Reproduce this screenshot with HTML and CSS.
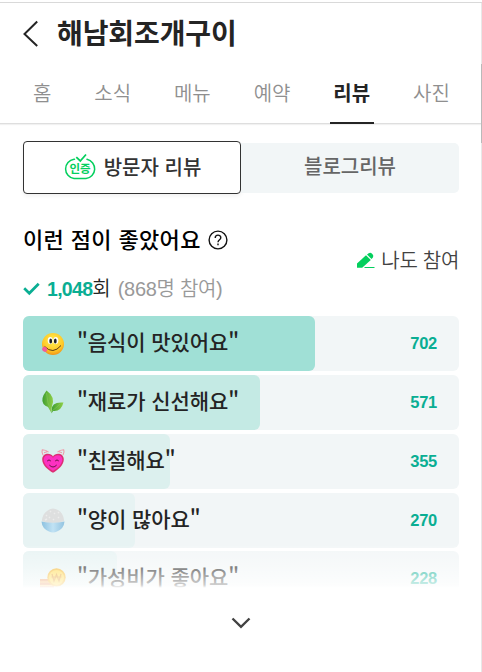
FILE: index.html
```html
<!DOCTYPE html>
<html lang="ko">
<head>
    <meta charset="UTF-8">
    <title>해남회조개구이</title>
    <link rel="stylesheet" href="styles.css">
</head>
<body>
<div class="page">
    <header class="header">
        <svg class="back" width="16" height="28" viewBox="0 0 16 28"><path d="M14.2 1.5 L1.5 14 L14.2 26" fill="none" stroke="#242424" stroke-width="2"/></svg>
        <h1>해남회조개구이</h1>
    </header>
    <nav class="tabs">
        <a>홈</a>
        <a>소식</a>
        <a>메뉴</a>
        <a>예약</a>
        <a class="on">리뷰</a>
        <a>사진</a>
    </nav>
    <main class="content">
        <div class="switch">
            <div class="switch-btn on">
                <svg width="34" height="28" viewBox="0 0 34 28">
                    <path d="M11.5 6.2 H11 A9.8 9.8 0 0 0 11 25.6 H23 A9.8 9.8 0 0 0 24 6.3" fill="none" stroke="#03cf5d" stroke-width="1.5" stroke-linecap="round"/>
                    <path d="M13.3 4.2 L17.3 8 L23 1.5" fill="none" stroke="#03cf5d" stroke-width="1.8"/>
                    <text x="17" y="20.3" text-anchor="middle">인증</text>
                </svg>
                <span>방문자 리뷰</span>
            </div>
            <div class="switch-btn">블로그리뷰</div>
        </div>
        <div class="summary">
            <div>
                <h2>이런 점이 좋았어요
                    <svg width="20" height="20" viewBox="0 0 20 20" fill="none" stroke="#111" stroke-width="1.4"><circle cx="10" cy="10" r="8.9"/><path d="M7.2 8 C7.2 4.2 12.8 4.2 12.8 7.8 C12.8 9.8 10 9.7 10 12.2"/><path d="M10 13.6 V15.2"/></svg>
                </h2>
                <p class="count">
                    <svg width="17" height="14" viewBox="0 0 17 14"><path d="M1.2 6.3 L6.3 11.3 L15.7 1.8" fill="none" stroke="#0aae93" stroke-width="2.7"/></svg>
                    <b>1,048</b><span>회</span><span class="people">(868명 참여)</span>
                </p>
            </div>
            <a class="join">
                <svg width="18" height="17" viewBox="0 0 18 17" fill="#03cf5d"><path d="M0 15.8 V11.6 L9 3.2 L13.8 8 L5.2 15.8 Z"/><path d="M10 2.5 L11.7 1.2 Q13.5 .1 15.3 1.9 Q17 3.8 15.7 5.7 L14.5 7 Z"/><path d="M7.5 15 H17.5 V16 H7.5 Z"/></svg>
                나도 참여
            </a>
        </div>
        <ul class="list">
            <li>
                <div class="bar c1" style="width:292px"></div>
                <svg class="icon" viewBox="0 0 24 24">
                    <defs><radialGradient id="face" cx=".5" cy=".35" r=".65"><stop offset="0" stop-color="#fff050"/><stop offset=".7" stop-color="#ffc928"/><stop offset="1" stop-color="#f19418"/></radialGradient></defs>
                    <circle cx="12" cy="12" r="11" fill="url(#face)"/>
                    <ellipse cx="9.2" cy="8.5" rx="2.5" ry="3.5" fill="#fff"/><ellipse cx="14.8" cy="8.5" rx="2.5" ry="3.5" fill="#fff"/>
                    <ellipse cx="9.7" cy="9" rx="1.4" ry="2.5" fill="#222"/><ellipse cx="14.3" cy="9" rx="1.4" ry="2.5" fill="#222"/>
                    <path d="M3.6 14.5 Q12 23 20 13.5" fill="none" stroke="#5b3b12" stroke-width="1"/>
                    <path d="M2.5 14.5 L5.5 15.5 Q7 18 5.5 19.5 Q3.5 20.7 1.5 18.5 Q.5 16.5 2.5 14.5 Z" fill="#f45c96"/>
                </svg>
                <strong>"음식이 맛있어요"</strong><em>702</em>
            </li>
            <li>
                <div class="bar c2" style="width:237px"></div>
                <svg class="icon" viewBox="0 0 24 24">
                    <defs><linearGradient id="leaf"><stop offset="0" stop-color="#3f9d30"/><stop offset="1" stop-color="#8fd048"/></linearGradient></defs>
                    <path d="M5.5 .5 Q-1 9 2.5 14 Q4 16 7 17 L10.5 23 L10.8 17 Q15 7 5.5 .5 Z" fill="url(#leaf)"/>
                    <path d="M11 20 Q10 11.5 22.5 12.5 Q20 22 12 21 L10.5 23.5 Z" fill="url(#leaf)"/>
                    <path d="M5.5 3 Q6 13 10.3 21.5 M11 21 Q15 18 19 14" fill="none" stroke="#8ccb60" stroke-width=".5"/>
                </svg>
                <strong>"재료가 신선해요"</strong><em>571</em>
            </li>
            <li>
                <div class="bar c3" style="width:147px"></div>
                <svg class="icon" viewBox="0 0 24 24">
                    <path d="M2 6 Q.3 3 1.3 .8 Q5 .8 7.5 3.2 M22 6 Q23.7 3 22.7 .8 Q19 .8 16.5 3.2 M3 3.8 L6 2.8 M21 3.8 L18 2.8" fill="none" stroke="#ef9aaa" stroke-width="1.1"/>
                    <path d="M12 7.5 C10 3.5 1.2 3.5 1.2 10.5 C1.2 16 7 21 12 23.8 C17 21 22.8 16 22.8 10.5 C22.8 3.5 14 3.5 12 7.5 Z" fill="#dc2f74"/>
                    <path d="M12 9 C10 5 2.7 5 2.7 10.5 C2.7 15 7.5 19.5 12 21.8 C16.5 19.5 21.3 15 21.3 10.5 C21.3 5 14 5 12 9 Z" fill="#fc31c1"/>
                    <path d="M6.2 12 Q8 9.8 9.8 12 M14.2 12 Q16 9.8 17.8 12 M8.3 16 Q12 20 15.7 16" fill="none" stroke="#571336" stroke-width=".9"/>
                </svg>
                <strong>"친절해요"</strong><em>355</em>
            </li>
            <li>
                <div class="bar c4" style="width:112px"></div>
                <svg class="icon" viewBox="0 0 24 24">
                    <defs><linearGradient id="bowl"><stop offset="0" stop-color="#8cc1e0"/><stop offset=".5" stop-color="#c1e2f4"/><stop offset="1" stop-color="#92c3e0"/></linearGradient></defs>
                    <path d="M.8 13 Q1.5 6 6 3 Q11-1.5 17 2 Q22.5 5 23.2 13 Q12 18 .8 13 Z" fill="#dedfdf"/>
                    <path d="M5 7 L6 8 M9 3 L10 4 M13 6 L14 5 M17 4 L18 5 M8 10 L9 9 M12 11 L13 12 M17 9 L18 10 M4 12 L6 11" stroke="#ececec" stroke-width="1.4"/>
                    <path d="M.5 13.5 Q12 16 23.5 13.5 Q23 20.5 16 23.5 Q12 25.5 8 23.5 Q1 20.5 .5 13.5 Z" fill="url(#bowl)"/>
                </svg>
                <strong>"양이 많아요"</strong><em>270</em>
            </li>
            <li>
                <div class="bar c4" style="width:94px"></div>
                <svg class="icon" viewBox="0 0 24 24">
                    <path d="M-1 13 H13 V23 H-1 Z" fill="#e9975e"/><path d="M-1 16 H13 M-1 19.5 H13" stroke="#ffd27c"/>
                    <circle cx="15.5" cy="11.5" r="9.2" fill="#f4b82f"/><circle cx="15.5" cy="11.5" r="7.5" fill="#ffda4d"/>
                    <path d="M11 8 L13 15 L15.5 8.5 L18 15 L20 8 M10.5 11 H20.5" fill="none" stroke="#e29a2d" stroke-width="1.2"/>
                </svg>
                <strong>"가성비가 좋아요"</strong><em>228</em>
            </li>
        </ul>
        <div class="more">
            <svg width="20" height="12" viewBox="0 0 20 12"><path d="M1.5 1.5 L10 9.8 L18.5 1.5" fill="none" stroke="#424242" stroke-width="2.4"/></svg>
        </div>
    </main>
    <div class="scroll"></div>
</div>
</body>
</html>
```
FILE: styles.css
```css
*{
    padding: 0;
    margin: 0;
    list-style: none;
    box-sizing: border-box;
}
body{
    font-family: "Noto Sans CJK KR", sans-serif;
    color: #242424;
    background: #fff;
}
svg{
    display: block;
    flex: none;
    overflow: visible;
}
.page{
    position: relative;
    height: 672px;
    padding-top: 2px;
    overflow: hidden;
}
.header{
    display: flex;
    align-items: center;
    height: 64px;
    padding: 0 0 1px 23px;
    border-top: 1px solid #d9d9d9;
}
.header h1{
    margin: -5px 0 0 18px;
    font-size: 28px;
    line-height: 40px;
    font-weight: 700;
    letter-spacing: -.1px;
}
.tabs{
    display: flex;
    gap: 35.5px;
    height: 58px;
    padding-left: 29.3px;
    border-bottom: 1px solid #dedede;
    box-shadow: 0 1px 1px #f1f1f1;
}
.tabs a{
    height: 58px;
    padding: 0 3.7px;
    font-size: 20px;
    line-height: 54px;
    font-weight: 350;
    color: #8f8f8f;
}
.tabs a.on{
    color: #242424;
    font-weight: 700;
    border-bottom: 2px solid #242424;
}
.content{
    padding: 17px 23px 0;
}
.switch{
    display: flex;
    align-items: center;
    height: 53px;
}
.switch-btn{
    display: flex;
    justify-content: center;
    align-items: center;
    width: 218px;
    height: 50px;
    padding-bottom: 4px;
    font-size: 20px;
    font-weight: 500;
    color: #666;
    background: #f2f6f7;
    border-radius: 0 5px 5px 0;
}
.switch-btn.on{
    gap: 7px;
    height: 53px;
    padding: 0 0 2px 0;
    color: #333;
    background: #fff;
    border: 1px solid #333;
    border-radius: 4px;
    box-shadow: 0 2px 4px rgba(0,0,0,.06);
}
.switch-btn text{
    font-size: 11.5px;
    font-weight: 700;
    fill: #03cf5d;
}
.summary{
    display: flex;
    justify-content: space-between;
    height: 122px;
    padding-top: 28px;
}
.summary h2{
    display: flex;
    align-items: center;
    gap: 8px;
    font-size: 22px;
    line-height: 32px;
    font-weight: 500;
    letter-spacing: .35px;
    color: #000;
}
.summary h2 svg{
    margin: 4px 0 0 -1px;
}
.count{
    display: flex;
    align-items: center;
    margin-top: 19px;
    font-size: 20px;
    line-height: 32px;
    font-weight: 350;
    font-family: "Liberation Sans", "Noto Sans CJK KR", sans-serif;
}
.count b{
    margin-left: 7px;
    font-size: 19.5px;
    font-weight: 700;
    letter-spacing: -.7px;
    color: #0aae93;
}
.count .people{
    margin-left: 7px;
    color: #999;
    letter-spacing: -.3px;
}
.join{
    display: flex;
    align-items: center;
    gap: 6px;
    height: 30px;
    margin-top: 22px;
    font-size: 20px;
    font-weight: 350;
    letter-spacing: -.3px;
    color: #424242;
}
.join svg{
    margin-top: 2px;
}
.list{
    position: relative;
    display: flex;
    flex-direction: column;
    gap: 3.9px;
    height: 280px;
    overflow: hidden;
}
/* 아래쪽 흐림 처리 */
.list::after{
    content: "";
    position: absolute;
    left: 0;
    right: 0;
    bottom: 0;
    height: 50px;
    background: linear-gradient(rgba(255,255,255,.1), rgba(255,255,255,.4) 40%, rgba(255,255,255,.78) 78%, #fff 84%);
}
.list li{
    position: relative;
    display: flex;
    flex: none;
    align-items: center;
    height: 55px;
    padding: 0 22px 0 18px;
    background: #f2f6f7;
    border-radius: 6px;
}
.list li:last-child{
    margin-top: -1px;
}
.bar{
    position: absolute;
    left: 0;
    top: 0;
    height: 100%;
    border-radius: 6px;
}
.c1{
    background: #a0e0d6;
}
.c2{
    background: #c4eae4;
}
.c3{
    background: #dcf0ee;
}
.c4{
    background: #e7f3f3;
}
.icon{
    position: relative;
    width: 24px;
    height: 24px;
}
.list strong{
    position: relative;
    margin: -5px 0 0 12px;
    font-size: 21px;
    font-weight: 500;
    letter-spacing: -.1px;
}
.list em{
    margin-left: auto;
    font: 700 16.5px "Liberation Sans", sans-serif;
    letter-spacing: -.3px;
    color: #0aae93;
}
.more{
    display: flex;
    justify-content: center;
    padding-top: 21px;
}
.scroll{
    position: absolute;
    right: 0;
    top: 3px;
    width: 1px;
    height: 669px;
    background: linear-gradient(#e8e8e8 61px, #b9b9b9 61px, #b9b9b9 140px, #e8e8e8 140px);
}
```
